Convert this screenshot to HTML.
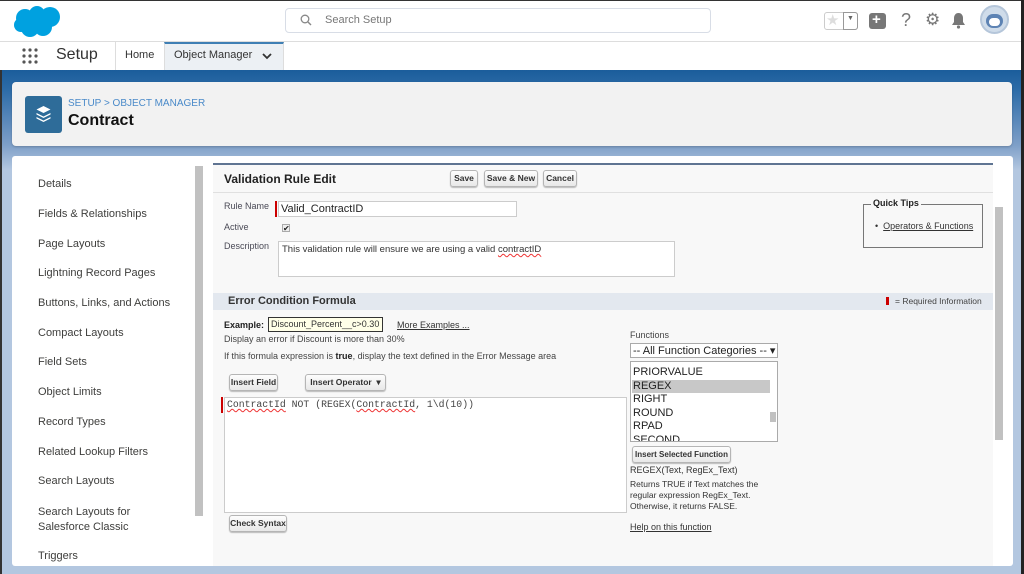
<!DOCTYPE html>
<html><head><meta charset="utf-8"><style>
*{box-sizing:border-box;margin:0;padding:0}
body{width:1024px;height:574px;overflow:hidden;font-family:"Liberation Sans",Arial,sans-serif;background:#b3c7e0;position:relative;color:#222}
.a{position:absolute}
.t{position:absolute;white-space:nowrap}
.btn{position:absolute;white-space:nowrap;overflow:hidden;border:1px solid #b5b5b5;border-radius:3px;background:linear-gradient(#fdfdfd,#e8e8e8);font-size:8.5px;font-weight:bold;color:#333;text-align:center;box-shadow:0 1px 1px #bbb}
.nav{position:absolute;left:38px;font-size:11px;color:#3e3e3c}
.lbl{position:absolute;font-size:9px;color:#4a4a56}
</style></head><body>
<div class="a" style="left:0;top:0;width:1024px;height:42px;background:#fff;border-bottom:1px solid #ddd"></div>
<svg class="a" style="left:13px;top:5px" width="49" height="32" viewBox="0 0 49 32"><g fill="#00a1e0"><circle cx="12" cy="13" r="9"/><circle cx="24" cy="9" r="8"/><circle cx="37" cy="12" r="10"/><circle cx="30" cy="22" r="9"/><circle cx="17" cy="23" r="9"/><circle cx="8" cy="20" r="7"/></g></svg>
<div class="a" style="left:285px;top:8px;width:426px;height:25px;border:1px solid #d8dde6;border-radius:4px;background:#fff"></div>
<svg class="a" style="left:300px;top:14px" width="12" height="12" viewBox="0 0 12 12"><circle cx="5" cy="5" r="3.8" fill="none" stroke="#888" stroke-width="1.3"/><path d="M8 8l3 3" stroke="#888" stroke-width="1.4"/></svg>
<div class="t" style="left:325px;top:14px;font-size:11px;color:#777">Search Setup</div>
<div class="a" style="left:824px;top:12px;width:34px;height:18px;border:1px solid #ccc;border-radius:3px;background:#fff"></div>
<div class="t" style="left:826px;top:11px;font-size:15px;color:#ddd">★</div>
<div class="a" style="left:843px;top:12px;width:15px;height:18px;border:1px solid #999;border-radius:0 3px 3px 0"></div>
<div class="t" style="left:847px;top:15px;font-size:7px;color:#666">▼</div>
<div class="a" style="left:869px;top:13px;width:17px;height:16px;border-radius:3px;background:#777"></div>
<div class="t" style="left:872px;top:11px;font-size:15px;color:#fff;font-weight:bold">+</div>
<div class="t" style="left:901px;top:10px;font-size:18px;color:#777">?</div>
<div class="t" style="left:925px;top:10px;font-size:17px;color:#777">⚙</div>
<svg class="a" style="left:951px;top:12px" width="15" height="17" viewBox="0 0 15 17"><path d="M7.5 1c-3 0-4.5 2.5-4.5 5v4l-2 3h13l-2-3V6c0-2.5-1.5-5-4.5-5z" fill="#777"/><circle cx="7.5" cy="15" r="1.6" fill="#777"/></svg>
<div class="a" style="left:980px;top:5px;width:29px;height:29px;border-radius:50%;background:#cfdcea;border:2px solid #b5c6da"></div>
<div class="a" style="left:986px;top:14px;width:17px;height:14px;border-radius:7px;background:#5d83b4"></div>
<div class="a" style="left:989px;top:18px;width:11px;height:8px;border-radius:4px;background:#fff"></div>
<div class="a" style="left:0;top:42px;width:1024px;height:28px;background:#fff"></div>
<svg class="a" style="left:21px;top:47px" width="18" height="18" viewBox="0 0 18 18"><g fill="#555"><circle cx="3" cy="3" r="1.6"/><circle cx="9" cy="3" r="1.6"/><circle cx="15" cy="3" r="1.6"/><circle cx="3" cy="9" r="1.6"/><circle cx="9" cy="9" r="1.6"/><circle cx="15" cy="9" r="1.6"/><circle cx="3" cy="15" r="1.6"/><circle cx="9" cy="15" r="1.6"/><circle cx="15" cy="15" r="1.6"/></g></svg>
<div class="t" style="left:56px;top:46px;font-size:16px;color:#333">Setup</div>
<div class="a" style="left:115px;top:42px;width:1px;height:28px;background:#ddd"></div>
<div class="t" style="left:125px;top:49px;font-size:11px;color:#333">Home</div>
<div class="a" style="left:164px;top:42px;width:120px;height:28px;background:#ecf0f4;border-top:2px solid #3f7fb4;border-left:1px solid #ddd;border-right:1px solid #ddd"></div>
<div class="t" style="left:174px;top:49px;font-size:11px;color:#333">Object Manager</div>
<svg class="a" style="left:262px;top:53px" width="10" height="7" viewBox="0 0 10 7"><path d="M1 1l4 4 4-4" fill="none" stroke="#333" stroke-width="1.8"/></svg>
<div class="a" style="left:0;top:70px;width:1024px;height:100px;background:linear-gradient(#1b5d9b 0px,#2d6ca8 20px,#7e9fc8 75px,#b3c7e0 100px)"></div>
<div class="a" style="left:12px;top:82px;width:1000px;height:64px;background:#f2f2f2;border-radius:4px;box-shadow:0 1px 2px rgba(0,0,0,.2)"></div>
<div class="a" style="left:25px;top:96px;width:37px;height:37px;background:#2e6c99;border-radius:3px"></div>
<svg class="a" style="left:35px;top:105px" width="17" height="19" viewBox="0 0 17 19"><g fill="#fff"><path d="M8.5 1l7 3.5-7 3.5-7-3.5z"/><path d="M1.5 8l7 3.5 7-3.5v1.5l-7 3.5-7-3.5z"/><path d="M1.5 12l7 3.5 7-3.5v1.5l-7 3.5-7-3.5z"/></g></svg>
<div class="t" style="left:68px;top:98px;font-size:10px;color:#4a8ac9">SETUP &gt; OBJECT MANAGER</div>
<div class="t" style="left:68px;top:112px;font-size:16px;font-weight:bold;color:#111">Contract</div>
<div class="a" style="left:12px;top:156px;width:192px;height:410px;background:#fff;border-radius:3px 0 0 3px"></div>
<div class="a" style="left:195px;top:166px;width:8px;height:350px;background:#c1c1c1"></div>
<div class="nav" style="top:178px">Details</div>
<div class="nav" style="top:208px">Fields &amp; Relationships</div>
<div class="nav" style="top:238px">Page Layouts</div>
<div class="nav" style="top:267px">Lightning Record Pages</div>
<div class="nav" style="top:297px">Buttons, Links, and Actions</div>
<div class="nav" style="top:327px">Compact Layouts</div>
<div class="nav" style="top:356px">Field Sets</div>
<div class="nav" style="top:386px">Object Limits</div>
<div class="nav" style="top:416px">Record Types</div>
<div class="nav" style="top:446px">Related Lookup Filters</div>
<div class="nav" style="top:475px">Search Layouts</div>
<div class="nav" style="top:505px;line-height:15px">Search Layouts for<br>Salesforce Classic</div>
<div class="nav" style="top:550px">Triggers</div>
<div class="a" style="left:204px;top:156px;width:809px;height:410px;background:#fff;border-radius:0 3px 3px 0"></div>
<div class="a" style="left:213px;top:163px;width:780px;height:403px;background:#f8f8f8;border-top:2px solid #5f7492"></div>
<div class="a" style="left:995px;top:207px;width:8px;height:233px;background:#c1c1c1"></div>
<div class="t" style="left:224px;top:172px;font-size:12px;font-weight:bold;color:#222">Validation Rule Edit</div>
<div class="btn" style="left:450px;top:170px;width:28px;height:17px;line-height:15px">Save</div>
<div class="btn" style="left:484px;top:170px;width:54px;height:17px;line-height:15px">Save &amp; New</div>
<div class="btn" style="left:543px;top:170px;width:34px;height:17px;line-height:15px">Cancel</div>
<div class="a" style="left:213px;top:192px;width:780px;height:1px;background:#e0e0e0"></div>
<div class="lbl" style="left:224px;top:201px">Rule Name</div>
<div class="a" style="left:275px;top:201px;width:2px;height:16px;background:#c00"></div>
<div class="a" style="left:278px;top:201px;width:239px;height:16px;background:#fff;border:1px solid #ccc"></div>
<div class="t" style="left:281px;top:203px;font-size:11px;color:#222">Valid_ContractID</div>
<div class="lbl" style="left:224px;top:222px">Active</div>
<div class="a" style="left:282px;top:224px;width:8px;height:8px;border:1px solid #aaa;background:#eee;font-size:8px;line-height:7px">✔</div>
<div class="lbl" style="left:224px;top:241px">Description</div>
<div class="a" style="left:278px;top:241px;width:397px;height:36px;background:#fff;border:1px solid #ccc"></div>
<div class="t" style="left:282px;top:244px;font-size:9.5px;color:#333">This validation rule will ensure we are using a valid <span style="text-decoration:underline wavy #e33">contractID</span></div>
<div class="a" style="left:863px;top:204px;width:120px;height:44px;border:1px solid #777"></div>
<div class="t" style="left:871px;top:198px;font-size:9px;font-weight:bold;background:#f8f8f8;padding:0 2px">Quick Tips</div>
<div class="t" style="left:875px;top:221px;font-size:9px;color:#333">•&nbsp; <u>Operators &amp; Functions</u></div>
<div class="a" style="left:213px;top:293px;width:780px;height:17px;background:#e3e8ef"></div>
<div class="t" style="left:228px;top:295px;font-size:11px;font-weight:bold;color:#333">Error Condition Formula</div>
<div class="a" style="left:886px;top:297px;width:3px;height:8px;background:#c00"></div>
<div class="t" style="left:895px;top:296px;font-size:8.5px;color:#444">= Required Information</div>
<div class="t" style="left:224px;top:320px;font-size:9px;font-weight:bold;color:#222">Example:</div>
<div class="a" style="left:268px;top:317px;width:115px;height:15px;background:#ffffe8;border:1px solid #333"></div>
<div class="t" style="left:271px;top:319px;font-size:9px;color:#333">Discount_Percent__c&gt;0.30</div>
<div class="t" style="left:397px;top:320px;font-size:9px;color:#333;text-decoration:underline">More Examples ...</div>
<div class="t" style="left:224px;top:334px;font-size:9px;color:#444">Display an error if Discount is more than 30%</div>
<div class="t" style="left:224px;top:351px;font-size:9px;color:#444">If this formula expression is <b style="color:#222">true</b>, display the text defined in the Error Message area</div>
<div class="btn" style="left:229px;top:374px;width:49px;height:17px;line-height:15px">Insert Field</div>
<div class="btn" style="left:305px;top:374px;width:81px;height:17px;line-height:15px">Insert Operator &nbsp;▾</div>
<div class="a" style="left:221px;top:397px;width:2px;height:16px;background:#c00"></div>
<div class="a" style="left:224px;top:397px;width:403px;height:116px;background:#fff;border:1px solid #ccc"></div>
<div class="t" style="left:227px;top:399px;font-size:9.8px;font-family:'Liberation Mono',monospace;color:#444"><span style="text-decoration:underline wavy #e33">ContractId</span> NOT (REGEX(<span style="text-decoration:underline wavy #e33">ContractId</span>, 1\d(10))</div>
<div class="btn" style="left:229px;top:515px;width:58px;height:17px;line-height:15px">Check Syntax</div>
<div class="t" style="left:630px;top:330px;font-size:9px;color:#444">Functions</div>
<div class="a" style="left:630px;top:343px;width:148px;height:15px;background:#fff;border:1px solid #aaa"></div>
<div class="t" style="left:633px;top:344px;font-size:11px;color:#222">-- All Function Categories -- ▾</div>
<div class="a" style="left:630px;top:361px;width:148px;height:81px;background:#fff;border:1px solid #aaa;overflow:hidden">
<div style="position:absolute;left:1px;top:4px;width:138px;font-size:11px;line-height:13.5px;color:#222">
<div style="padding-left:1px">PRIORVALUE</div><div style="padding-left:1px;background:#c8c8c8">REGEX</div><div style="padding-left:1px">RIGHT</div><div style="padding-left:1px">ROUND</div><div style="padding-left:1px">RPAD</div><div style="padding-left:1px">SECOND</div></div>
<div style="position:absolute;left:139px;top:50px;width:6px;height:10px;background:#c1c1c1"></div>
</div>
<div class="btn" style="left:632px;top:446px;width:99px;height:17px;line-height:15px;font-size:8px">Insert Selected Function</div>
<div class="t" style="left:630px;top:465px;font-size:9px;color:#333">REGEX(Text, RegEx_Text)</div>
<div class="t" style="left:630px;top:479px;font-size:8.5px;color:#333;line-height:11px">Returns TRUE if Text matches the<br>regular expression RegEx_Text.<br>Otherwise, it returns FALSE.</div>
<div class="t" style="left:630px;top:522px;font-size:9px;color:#333;text-decoration:underline">Help on this function</div>
<div class="a" style="left:0;top:0;width:1024px;height:1px;background:#333"></div>
<div class="a" style="left:1021px;top:0;width:3px;height:574px;background:#222"></div>
<div class="a" style="left:0;top:70px;width:2px;height:504px;background:#333"></div>
</body></html>
